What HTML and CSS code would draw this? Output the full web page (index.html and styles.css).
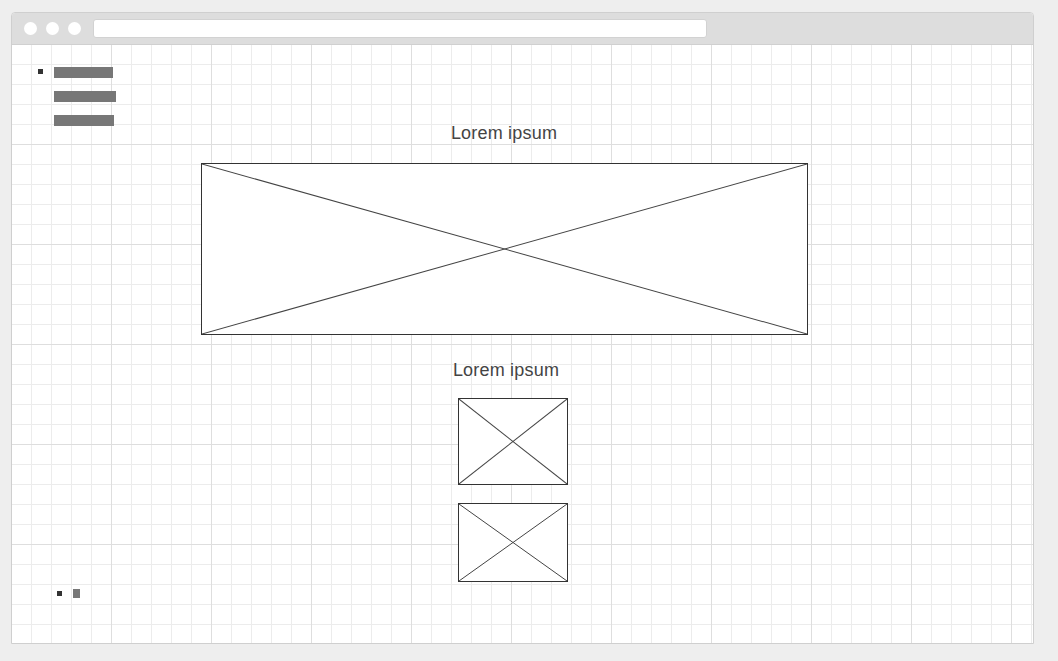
FILE: index.html
```html
<!DOCTYPE html>
<html lang="en">
<head>
    <meta charset="UTF-8">
    <meta name="viewport" content="width=device-width, initial-scale=1.0">
    <title>Wireframe</title>
    <link rel="stylesheet" href="styles.css">
</head>
<body>
    <div class="browser">
        <div class="browser-bar">
            <span class="dot"></span>
            <span class="dot"></span>
            <span class="dot"></span>
            <div class="address"></div>
        </div>

        <div class="page">
            <!-- menu -->
            <ul class="menu">
                <li>
                    <span class="bullet"></span>
                    <div class="menu-links">
                        <span class="menu-link link-1"></span>
                        <span class="menu-link link-2"></span>
                        <span class="menu-link link-3"></span>
                    </div>
                </li>
            </ul>

            <main class="content">
                <h2 class="title">Lorem ipsum</h2>
                <div class="placeholder placeholder-wide">
                    <svg viewBox="0 0 100 100" preserveAspectRatio="none">
                        <line x1="0" y1="0" x2="100" y2="100" vector-effect="non-scaling-stroke"/>
                        <line x1="0" y1="100" x2="100" y2="0" vector-effect="non-scaling-stroke"/>
                    </svg>
                </div>

                <h2 class="title title-second">Lorem ipsum</h2>
                <div class="thumbs">
                    <div class="placeholder placeholder-tall">
                        <svg viewBox="0 0 100 100" preserveAspectRatio="none">
                            <line x1="0" y1="0" x2="100" y2="100" vector-effect="non-scaling-stroke"/>
                            <line x1="0" y1="100" x2="100" y2="0" vector-effect="non-scaling-stroke"/>
                        </svg>
                    </div>
                    <div class="placeholder placeholder-short">
                        <svg viewBox="0 0 100 100" preserveAspectRatio="none">
                            <line x1="0" y1="0" x2="100" y2="100" vector-effect="non-scaling-stroke"/>
                            <line x1="0" y1="100" x2="100" y2="0" vector-effect="non-scaling-stroke"/>
                        </svg>
                    </div>
                </div>
            </main>

            <!-- footer -->
            <ul class="footer-list">
                <li>
                    <span class="bullet"></span>
                    <span class="footer-mark"></span>
                </li>
            </ul>
        </div>
    </div>
</body>
</html>
```

FILE: styles.css
```css
html, body {
    margin: 0;
    height: 100%;
}
body {
    font-family: "Liberation Sans", Arial, sans-serif;
    background-color: #eeeeee;
    padding: 12px 0 0 11px;
    box-sizing: border-box;
}

.browser {
    width: 1023px;
    height: 632px;
    box-sizing: border-box;
    border: 1px solid #cfcfcf;
    border-radius: 4px 4px 0 0;
    background-color: #ffffff;
    display: flex;
    flex-direction: column;
}
.browser-bar {
    height: 31px;
    flex-shrink: 0;
    background-color: #dddddd;
    border-bottom: 1px solid #d0d0d0;
    border-radius: 3px 3px 0 0;
    display: flex;
    align-items: center;
    padding-left: 12px;
    gap: 9px;
}
.dot {
    width: 13px;
    height: 13px;
    border-radius: 50%;
    background-color: #ffffff;
}
.address {
    width: 612px;
    height: 17px;
    margin-left: 3px;
    background-color: #ffffff;
    border: 1px solid #d2d2d2;
    border-radius: 3px;
}

/* grid paper */
.page {
    flex: 1;
    background-color: #ffffff;
    background-image:
        linear-gradient(to right, transparent 99px, #dedede 99px),
        linear-gradient(to bottom, transparent 99px, #dedede 99px),
        linear-gradient(to right, transparent 19px, #ececec 19px),
        linear-gradient(to bottom, transparent 19px, #ececec 19px);
    background-size: 100px 100px, 100px 100px, 20px 20px, 20px 20px;
}

.bullet {
    width: 5px;
    height: 5px;
    flex-shrink: 0;
    background-color: #333333;
    margin-right: 11px;
}

.menu {
    margin: 0;
    padding: 22px 0 0 26px;
    list-style: none;
}
.menu li {
    display: flex;
    align-items: flex-start;
}
.menu .bullet {
    margin-top: 2px;
}
.menu-links {
    display: flex;
    flex-direction: column;
    gap: 13px;
}
.menu-link {
    height: 11px;
    background-color: #777777;
}
.link-1 { width: 59px; }
.link-2 { width: 62px; }
.link-3 { width: 60px; }

.content {
    display: flex;
    flex-direction: column;
    align-items: center;
    padding-right: 36px;
}
.title {
    margin: 0 1px 23px 0;
    font-size: 18px;
    line-height: 14px;
    letter-spacing: 0.2px;
    font-weight: normal;
    color: #444444;
}
.title-second {
    margin: 0 0 21px 3px;
}

.placeholder {
    box-sizing: border-box;
    border: 1px solid #333333;
    background-color: #ffffff;
}
.placeholder svg {
    display: block;
    width: 100%;
    height: 100%;
}
.placeholder line {
    stroke: #444444;
    stroke-width: 1;
}
.placeholder-wide {
    width: 607px;
    height: 172px;
    margin-bottom: 28px;
}
.thumbs {
    display: flex;
    flex-direction: column;
    gap: 18px;
    margin-left: 17px;
}
.placeholder-tall {
    width: 110px;
    height: 87px;
}
.placeholder-short {
    width: 110px;
    height: 79px;
}

.footer-list {
    margin: 7px 0 0 0;
    padding: 0 0 0 45px;
    list-style: none;
}
.footer-list li {
    display: flex;
    align-items: center;
}
.footer-mark {
    width: 7px;
    height: 9px;
    background-color: #777777;
}
```
